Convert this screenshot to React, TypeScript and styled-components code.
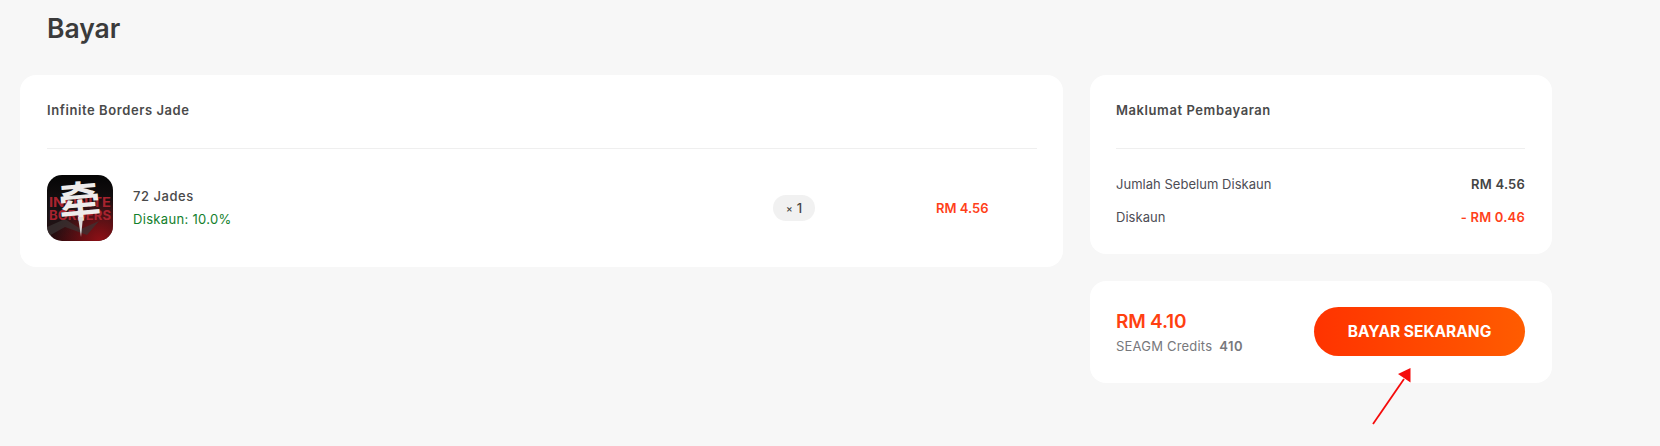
import React from "react";
import styled, { createGlobalStyle } from "styled-components";

const GlobalStyle = createGlobalStyle`
  html, body {
    margin: 0;
    padding: 0;
    background: #f7f7f7;
    font-family: Inter, "Noto Sans", "Liberation Sans", sans-serif;
  }
`;

const Page = styled.div`
  position: relative;
  width: 1660px;
  height: 446px;
  overflow: hidden;
  padding: 10px 0 0 20px;
  box-sizing: border-box;
`;

const Title = styled.h1`
  margin: 0 0 28px 27px;
  font-size: 26.5px;
  line-height: 37px;
  font-weight: 600;
  color: #3b3b3b;
`;

const Columns = styled.div`
  display: grid;
  grid-template-columns: 1043px 462px;
  column-gap: 27px;
  align-items: start;
`;

const Side = styled.div`
  display: flex;
  flex-direction: column;
  gap: 27px;
`;

const Card = styled.section`
  background: #fff;
  border-radius: 16px;
  padding: 0 26px 0 27px;
`;

const SideCard = styled(Card)`
  padding: 0 27px 0 26px;
`;

const CardTitle = styled.h2`
  margin: 0;
  height: 74px;
  padding-top: 27px;
  box-sizing: border-box;
  border-bottom: 1px solid #efefef;
  font-size: 13px;
  line-height: 17px;
  font-weight: 600;
  letter-spacing: 0.58px;
  color: #4a4a4a;
`;

const ItemRow = styled.div`
  display: flex;
  align-items: center;
  padding: 26px 0;
`;

const Thumb = styled.svg`
  width: 66px;
  height: 66px;
  flex: none;
  border-radius: 15px;
`;

const ItemInfo = styled.div`
  width: 640px;
  margin-left: 20px;
  display: flex;
  flex-direction: column;
  gap: 6px;
`;

const ItemName = styled.div`
  font-size: 13px;
  line-height: 17px;
  font-weight: 500;
  letter-spacing: 0.55px;
  color: #4a4a4a;
`;

const ItemDiscount = styled.div`
  font-size: 13px;
  line-height: 17px;
  font-weight: 400;
  letter-spacing: 0.32px;
  color: #12802c;
`;

const Qty = styled.div`
  width: 42px;
  height: 26px;
  margin-bottom: 1px;
  border-radius: 13px;
  background: #f1f1f1;
  display: flex;
  align-items: center;
  justify-content: center;
  gap: 4px;
  font-size: 13px;
  font-weight: 500;
  color: #444;
`;

const QtyMark = styled.span`
  font-size: 10px;
`;

const ItemPrice = styled.div`
  margin: 0 0 1px 121px;
  font-size: 13px;
  font-weight: 600;
  letter-spacing: 0;
  color: #ff3f1a;
`;

const Rows = styled.div`
  padding: 27px 0 28px;
  display: flex;
  flex-direction: column;
  gap: 16px;
`;

const Row = styled.div`
  display: flex;
  justify-content: space-between;
  align-items: center;
  font-size: 13px;
  line-height: 17px;
  letter-spacing: 0.03px;
  color: #4d4d55;
`;

const RowValue = styled.span<{ $accent?: boolean }>`
  font-weight: 600;
  letter-spacing: 0.2px;
  color: ${(p) => (p.$accent ? "#ff3f1a" : "#444")};
`;

const PayBar = styled(SideCard)`
  display: flex;
  justify-content: space-between;
  align-items: center;
  height: 102px;
  box-sizing: border-box;
  padding-bottom: 1px;
`;

const Total = styled.div`
  font-size: 19px;
  line-height: 26px;
  font-weight: 600;
  letter-spacing: -0.2px;
  color: #ff4010;
`;

const Credits = styled.div`
  margin-top: 3px;
  font-size: 13px;
  line-height: 17px;
  letter-spacing: 0.2px;
  color: #77787c;
`;

const CreditsValue = styled.b`
  margin-left: 7px;
  font-weight: 600;
  letter-spacing: 0.5px;
`;

const PayButton = styled.button`
  width: 211px;
  height: 49px;
  border: 0;
  border-radius: 25px;
  background: linear-gradient(90deg, #ff3300, #ff5c00);
  color: #fff;
  font-family: inherit;
  font-size: 15.5px;
  font-weight: 700;
  letter-spacing: 0;
`;

const ArrowMark = styled.svg`
  position: absolute;
  left: 1360px;
  top: 360px;
  width: 60px;
  height: 70px;
`;

const GameThumb = () => (
  <Thumb viewBox="0 0 66 66">
    <defs>
      <linearGradient id="thumbBg" x1="0" y1="0" x2="0" y2="1">
        <stop offset="0" stopColor="#050505" />
        <stop offset="0.6" stopColor="#1a1416" />
        <stop offset="1" stopColor="#2a0b0e" />
      </linearGradient>
      <radialGradient id="thumbGlow" cx="0.8" cy="1" r="0.7">
        <stop offset="0" stopColor="#8f1016" />
        <stop offset="1" stopColor="#8f1016" stopOpacity="0" />
      </radialGradient>
    </defs>
    <rect width="66" height="66" fill="url(#thumbBg)" />
    <rect width="66" height="66" fill="url(#thumbGlow)" />
    <path d="M0 52 L18 44 L34 54 L52 46 L40 60 L18 52 L0 62 Z" fill="#3a3435" opacity="0.7" />
    <text x="2" y="32" textLength="62" lengthAdjust="spacingAndGlyphs" fontFamily="Inter, sans-serif" fontSize="13" fontWeight="700" fill="#a8232f">
      INFINITE
    </text>
    <text x="2" y="45" textLength="62" lengthAdjust="spacingAndGlyphs" fontFamily="Inter, sans-serif" fontSize="13" fontWeight="700" fill="#a8232f">
      BORDERS
    </text>
    <text transform="translate(34 42) scale(1.05 1.05) rotate(-5)" textAnchor="middle" fontFamily="'Noto Sans CJK SC', sans-serif" fontSize="40" fontWeight="700" fill="#eeeceb">
      牵
    </text>
    <path d="M31 42 L36 42 L34 62 Z" fill="#dcdad9" />
  </Thumb>
);

export default function App() {
  return (
    <Page>
      <GlobalStyle />
      <Title>Bayar</Title>
      <Columns>
        <Card>
          <CardTitle>Infinite Borders Jade</CardTitle>
          <ItemRow>
            <GameThumb />
            <ItemInfo>
              <ItemName>72 Jades</ItemName>
              <ItemDiscount>Diskaun: 10.0%</ItemDiscount>
            </ItemInfo>
            <Qty>
              <QtyMark>×</QtyMark>1
            </Qty>
            <ItemPrice>RM 4.56</ItemPrice>
          </ItemRow>
        </Card>
        <Side>
          <SideCard>
            <CardTitle>Maklumat Pembayaran</CardTitle>
            <Rows>
              <Row>
                <span>Jumlah Sebelum Diskaun</span>
                <RowValue>RM 4.56</RowValue>
              </Row>
              <Row>
                <span>Diskaun</span>
                <RowValue $accent>- RM 0.46</RowValue>
              </Row>
            </Rows>
          </SideCard>
          <PayBar>
            <div>
              <Total>RM 4.10</Total>
              <Credits>
                SEAGM Credits<CreditsValue>410</CreditsValue>
              </Credits>
            </div>
            <PayButton>BAYAR SEKARANG</PayButton>
          </PayBar>
        </Side>
      </Columns>
      <ArrowMark viewBox="0 0 60 70">
        <path d="M13 64 L44 19" stroke="#f50b0b" strokeWidth="1.8" fill="none" />
        <path d="M50.5 8 L50.5 22.5 L38 14 Z" fill="#f50b0b" />
      </ArrowMark>
    </Page>
  );
}
